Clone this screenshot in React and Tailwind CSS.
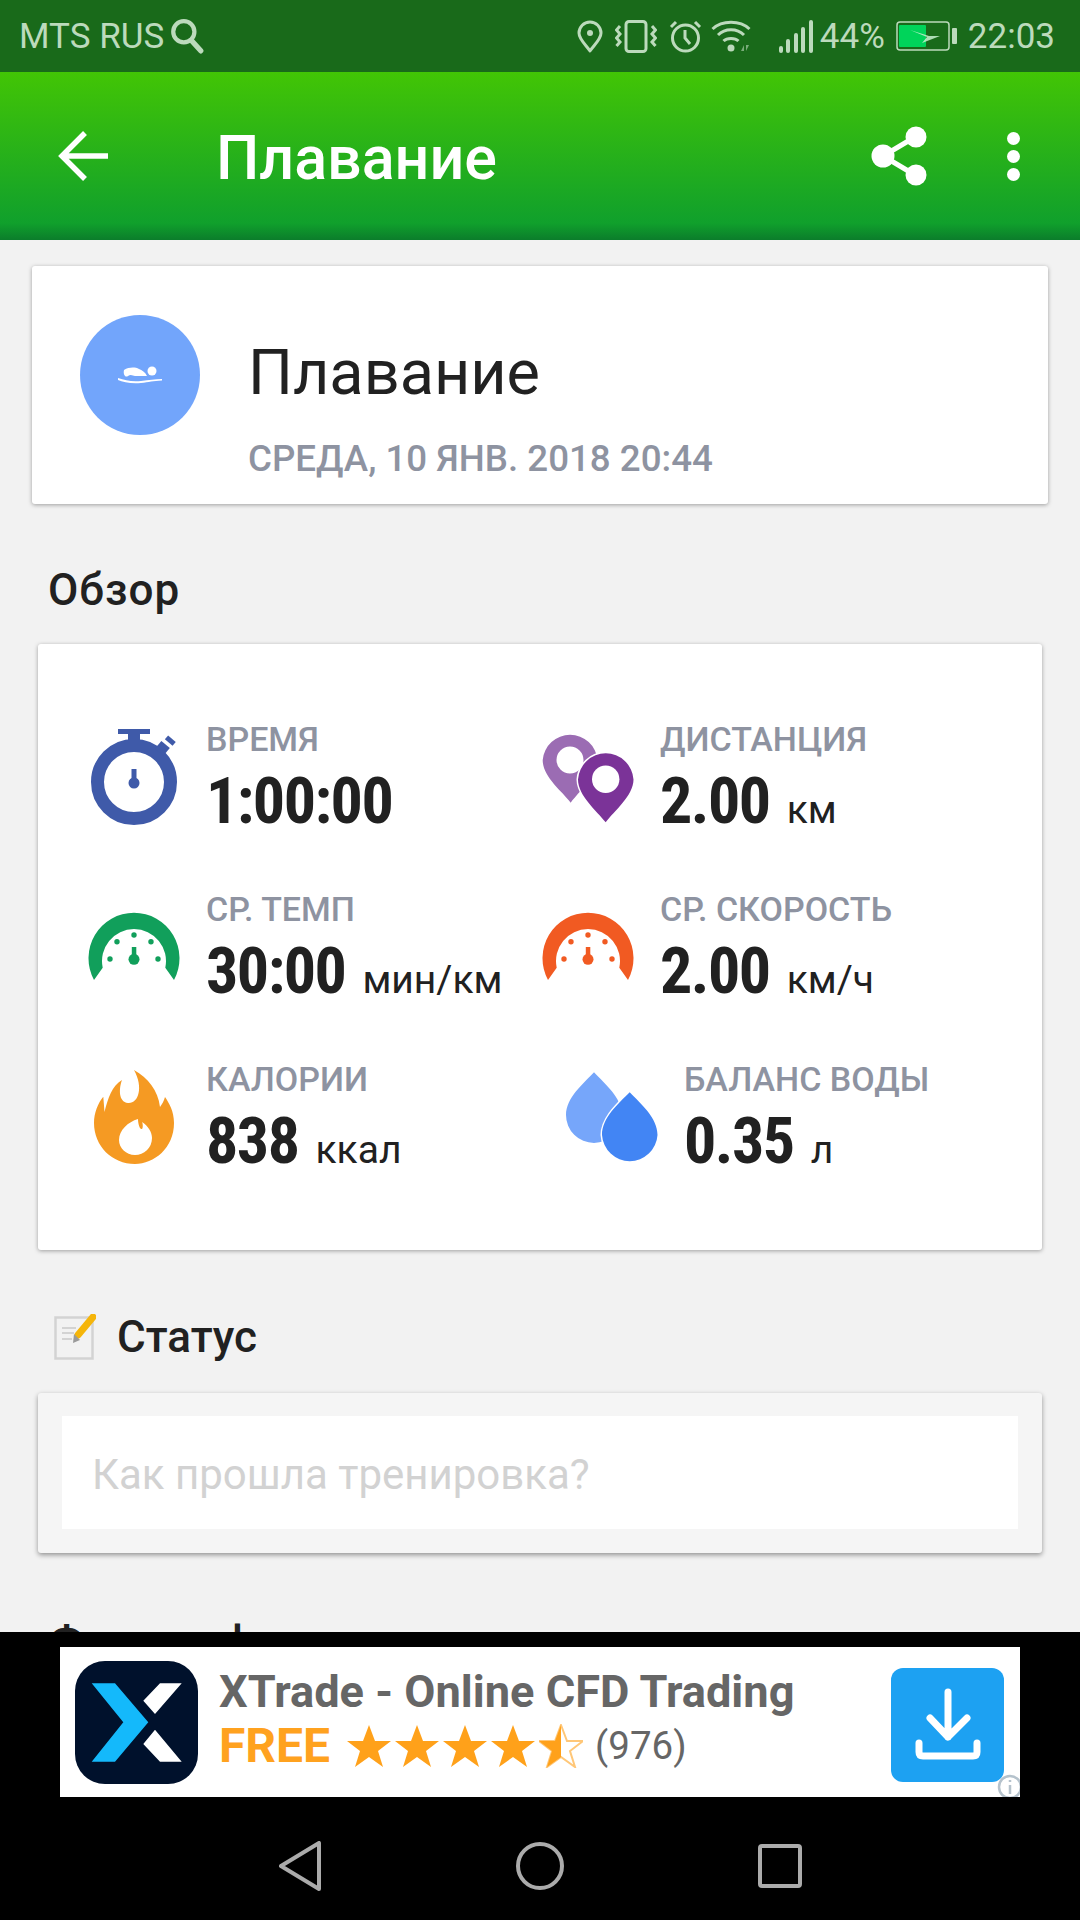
import React from 'react';

const condensed = "[font-family:'Roboto_Condensed','Liberation_Sans_Narrow',Roboto,sans-serif]";

function Stopwatch() {
  return (
    <svg width="92" height="110" viewBox="0 0 92 110">
      <circle cx="46" cy="64" r="36.5" fill="none" stroke="#3f5aa9" strokeWidth="13" />
      <rect x="30" y="11" width="32" height="5" fill="#3f5aa9" />
      <rect x="40" y="16" width="12" height="12" fill="#3f5aa9" />
      <rect x="69" y="25" width="11" height="10" transform="rotate(40 74 30)" fill="#3f5aa9" />
      <rect x="77" y="20" width="10" height="5" transform="rotate(40 82 23)" fill="#3f5aa9" />
      <rect x="43.5" y="51" width="5" height="14" fill="#3f5aa9" />
      <circle cx="46" cy="65" r="5.5" fill="#3f5aa9" />
    </svg>
  );
}

function Gauge({ color }) {
  return (
    <svg width="92" height="110" viewBox="0 0 92 110" fill={color}>
      <path d="M6 92A45.5 45.5 0 1 1 86 92L77.3 79.7A32 32 0 1 0 14.7 79.7Z" />
      <circle cx="22" cy="71" r="2.7" />
      <circle cx="29" cy="53.7" r="2.7" />
      <circle cx="46" cy="47" r="2.7" />
      <circle cx="63" cy="53.7" r="2.7" />
      <circle cx="70" cy="71" r="2.7" />
      <rect x="43.8" y="59" width="4.5" height="12" />
      <circle cx="46" cy="71.3" r="5.5" />
    </svg>
  );
}

function Pins() {
  return (
    <svg width="92" height="110" viewBox="0 0 92 110">
      <path fillRule="evenodd" fill="#9b6cb3" d="M28.7 84.7C20 73 0.7 59 0.7 42A27.5 27.5 0 0 1 55.5 42C55.5 59 37 73 28.7 84.7ZM28 28.5A13.5 13.5 0 1 0 28 55.5A13.5 13.5 0 1 0 28 28.5Z" />
      <path fill="#7b3398" stroke="#fff" strokeWidth="3" paintOrder="stroke" d="M63.7 104.3C55 93 36 78 36 61.5A27.8 27.8 0 0 1 91.5 61.5C91.5 78 72 93 63.7 104.3Z" />
      <circle cx="63.7" cy="61.3" r="13.7" fill="#fff" />
    </svg>
  );
}

function Flame() {
  return (
    <svg width="92" height="110" viewBox="0 0 92 110">
      <path fill="#f59a23" d="M46 12C60 20 70 32 72 49C74 46 76 43 77 39C81 45 86 53 86 65C86 90 66 106 47 106C24 106 6 88 6 65C6 55 10 45 15.3 38.7L16.5 54C20 40 24 28 34 22C31 30 30 44 40 45C50 46 56 30 46 12Z" />
      <path fill="#fff" d="M50 61C50 66 52 72 54 71C55 70 55 66 54 64C60 68 64 74 64 80C64 90 56 97 47 97C38 97 31 90 31 82C31 72 40 64 50 61Z" />
    </svg>
  );
}

function Drops() {
  return (
    <svg width="92" height="110" viewBox="0 0 92 110">
      <path fill="#76a6fa" d="M28 14.3C39 26 56 40 56 57A28 28 0 0 1 0 57C0 40 17 26 28 14.3Z" />
      <path fill="#4285f4" stroke="#fff" strokeWidth="3" paintOrder="stroke" d="M63.7 34.3C75 46 91.5 60 91.5 77A27.8 27.8 0 0 1 36 77C36 60 52 46 63.7 34.3Z" />
    </svg>
  );
}

function Stat({ icon, label, value, unit, className = '' }) {
  return (
    <div className={`flex h-[170px] gap-[26px] ${className}`}>
      <div className="w-[92px] shrink-0">{icon}</div>
      <div className="pt-[1px]">
        <div className="text-[34px] leading-[40px] font-medium text-[#8e93a1]">{label}</div>
        <div className="mt-[11px] flex items-baseline leading-[64px] text-[#212121] whitespace-nowrap">
          <span className={`text-[64px] font-bold tracking-[-1.5px] ${condensed}`}>{value}</span>
          {unit && <span className="ml-[17px] text-[39px]">{unit}</span>}
        </div>
      </div>
    </div>
  );
}

function Star({ half }) {
  const pts = '22,1 28,17 44,17 31,27 36,43 22,33 8,43 13,27 0,17 16,17';
  return (
    <svg width="44" height="44" viewBox="0 0 44 44">
      {half ? (
        <>
          <polygon points={pts} fill="none" stroke="#ffc778" strokeWidth="2" />
          <polygon points="22,1 16,17 0,17 13,27 8,43 22,33" fill="#ffa11a" />
        </>
      ) : (
        <polygon points={pts} fill="#ffa11a" />
      )}
    </svg>
  );
}

function StatusIcons() {
  const c = '#bcdabc';
  return (
    <>
      <svg width="26" height="33" viewBox="0 0 26 33" fill="none" stroke={c} strokeWidth="3">
        <path d="M13 31C8 24 2 19 2 13A11 11 0 0 1 24 13C24 19 18 24 13 31Z" strokeLinejoin="round" />
        <circle cx="13" cy="13" r="3" fill={c} stroke="none" />
      </svg>
      <svg className="ml-[12px]" width="42" height="33" viewBox="0 0 42 33" fill="none" stroke={c} strokeWidth="3">
        <rect x="11" y="1.5" width="20" height="30" rx="3" />
        <path d="M5 6L1.5 10L5 14L1.5 18L5 22L1.5 26M37 6L40.5 10L37 14L40.5 18L37 22L40.5 26" />
      </svg>
      <svg className="ml-[12px]" width="33" height="33" viewBox="0 0 33 33" fill="none" stroke={c} strokeWidth="3">
        <circle cx="16.5" cy="18" r="13" />
        <path d="M16 10V18L21 24M2 7L7 2M31 7L26 2" />
      </svg>
      <svg className="ml-[9px]" width="40" height="33" viewBox="0 0 40 33" fill="none" stroke={c} strokeWidth="3">
        <path d="M1.5 9C11 0 29 0 38.5 9M7 15C14 8 26 8 33 15M12.5 21C16 17.5 24 17.5 27.5 21" />
        <circle cx="20" cy="28" r="3.5" fill={c} stroke="none" />
        <path d="M30 31L33 25V31ZM35 25L38 25L35 31Z" fill={c} stroke="none" opacity="0.6" />
      </svg>
      <svg className="ml-[28px]" width="35" height="33" viewBox="0 0 35 33" fill={c}>
        <rect x="0" y="26" width="4" height="7" rx="2" />
        <rect x="7" y="19" width="4" height="14" rx="2" />
        <rect x="15" y="13" width="4" height="20" rx="2" />
        <rect x="22" y="7" width="4" height="26" rx="2" />
        <rect x="30" y="0" width="4" height="33" rx="2" />
      </svg>
      <span className="ml-[6px] text-[35px] leading-none">44%</span>
      <svg className="ml-[11px]" width="61" height="30" viewBox="0 0 61 30">
        <rect x="1" y="1" width="52" height="28" rx="3" fill="none" stroke={c} strokeWidth="1.5" />
        <rect x="3" y="4" width="27" height="22" rx="1" fill="#00d45a" />
        <rect x="56" y="7" width="5" height="16" rx="1" fill={c} />
        <path d="M14 9L33 15L44 15L26 22L31 16Z" fill="#c8f0d0" opacity="0.85" />
      </svg>
      <span className="ml-[11px] text-[35px] leading-none">22:03</span>
    </>
  );
}

export default function App() {
  const stars = [0, 1, 2, 3];

  return (
    <div className="flex h-[1920px] w-[1080px] flex-col overflow-hidden bg-black font-['Roboto',sans-serif]">
      <div className="flex h-[72px] shrink-0 items-center justify-between bg-[#196a1a] pl-[19px] pr-[25px] text-[#bcdabc]">
        <div className="flex items-center">
          <span className="text-[35px] leading-none">MTS RUS</span>
          <svg className="ml-[6px]" width="34" height="36" viewBox="0 0 32 34" fill="none" stroke="#bcdabc">
            <circle cx="13" cy="13" r="10" strokeWidth="4" />
            <path d="M20 21L29 31" strokeWidth="5" strokeLinecap="round" />
          </svg>
        </div>
        <div className="flex items-center"><StatusIcons /></div>
      </div>

      <div className="flex h-[168px] shrink-0 items-center bg-[linear-gradient(180deg,#42c505_0%,#10a02c_90%,#0b7d2b_100%)] text-white">
        <svg className="ml-[58px]" width="52" height="52" viewBox="0 0 52 52" fill="none" stroke="#fff" strokeWidth="5.5">
          <path d="M50 26H5M27 3L4 26L27 49" />
        </svg>
        <h1 className="ml-[106px] pt-[4px] text-[61px] font-medium leading-none">Плавание</h1>
        <svg className="ml-auto" width="58" height="60" viewBox="0 0 58 60" fill="#fff" stroke="#fff">
          <path d="M44 11L12 30L44 49" fill="none" strokeWidth="5" />
          <circle cx="45" cy="11" r="10.5" stroke="none" />
          <circle cx="12" cy="30" r="11.5" stroke="none" />
          <circle cx="45" cy="49" r="10.5" stroke="none" />
        </svg>
        <div className="ml-[78px] mr-[60px] flex flex-col gap-[5px]">
          <span className="h-[13px] w-[13px] rounded-full bg-white" />
          <span className="h-[13px] w-[13px] rounded-full bg-white" />
          <span className="h-[13px] w-[13px] rounded-full bg-white" />
        </div>
      </div>

      <main className="min-h-0 flex-1 overflow-hidden bg-[#f2f2f2]">
        <section className="mx-[32px] mt-[26px] flex h-[238px] items-start rounded-[3px] bg-white pl-[48px] shadow-[0_1px_4px_rgba(0,0,0,0.35)]">
          <div className="mt-[49px] flex h-[120px] w-[120px] items-center justify-center rounded-full bg-[#72a5fb]">
            <svg width="46" height="18" viewBox="0 0 46 18" fill="#fff">
              <circle cx="35" cy="5" r="4.5" />
              <path d="M7 4C12 1 18 1 22 3C25 4 28 6 30 10L18 10C16 10 14 8 11 10C8 12 6 8 7 4Z" />
              <path d="M1 12C8 14 14 16 24 15C32 14 38 13 45 13L45 14.5C36 15 32 16 24 17C14 18 6 16 1 14Z" />
            </svg>
          </div>
          <div className="ml-[48px] mt-[74px]">
            <div className="text-[63px] leading-[66px] text-[#212121]">Плавание</div>
            <div className="mt-[33px] text-[36.7px] font-medium leading-[40px] text-[#8e93a1]">СРЕДА, 10 ЯНВ. 2018 20:44</div>
          </div>
        </section>

        <h2 className="ml-[48px] mt-[64px] text-[44px] font-medium leading-[44px] tracking-[1px] text-[#212121]">Обзор</h2>

        <section className="mx-[38px] mt-[32px] grid h-[606px] grid-cols-[454px_1fr] content-start rounded-[3px] bg-white pl-[50px] pt-[74px] shadow-[0_1px_4px_rgba(0,0,0,0.35)]">
          <Stat icon={<Stopwatch />} label="ВРЕМЯ" value="1:00:00" />
          <Stat icon={<Pins />} label="ДИСТАНЦИЯ" value="2.00" unit="км" />
          <Stat icon={<Gauge color="#119f5b" />} label="СР. ТЕМП" value="30:00" unit="мин/км" />
          <Stat icon={<Gauge color="#f15a22" />} label="СР. СКОРОСТЬ" value="2.00" unit="км/ч" />
          <Stat icon={<Flame />} label="КАЛОРИИ" value="838" unit="ккал" />
          <Stat icon={<Drops />} label="БАЛАНС ВОДЫ" value="0.35" unit="л" className="ml-[24px]" />
        </section>

        <div className="ml-[54px] mt-[60px] flex h-[54px] items-center">
          <svg width="42" height="46" viewBox="0 0 42 46">
            <rect x="1.5" y="3.5" width="37" height="41" fill="#f2f2f2" stroke="#d3d3d3" strokeWidth="2.5" />
            <path d="M8 14H22M8 19H20M8 25H18" stroke="#d3d3d3" strokeWidth="2" />
            <path d="M24 21L39 3" stroke="#f5b50a" strokeWidth="7" strokeLinecap="round" />
            <path d="M20 20L26 26L19 29Z" fill="#9a9a9a" />
          </svg>
          <span className="ml-[21px] text-[44px] font-medium leading-none text-[#212121]">Статус</span>
        </div>

        <section className="mx-[38px] mt-[29px] h-[160px] rounded-[3px] bg-[#f5f5f5] px-[24px] pt-[23px] shadow-[0_2px_5px_rgba(0,0,0,0.4)]">
          <input
            placeholder="Как прошла тренировка?"
            className="h-[113px] w-full bg-white px-[30px] pt-[4px] text-[42px] outline-none placeholder:text-[#d2d2d2]"
          />
        </section>

        <h2 className="ml-[49px] mt-[67px] text-[44px] font-medium leading-[44px] text-[#212121]">Фотографии</h2>
      </main>

      <div className="h-[288px] shrink-0 bg-black">
        <div className="relative mx-[60px] mt-[15px] flex h-[150px] items-center overflow-hidden bg-white pl-[15px]">
          <svg width="123" height="123" viewBox="0 0 123 123">
            <rect width="123" height="123" rx="30" fill="#00112c" />
            <path d="M16.7 22.3H40L73.3 61.3L40 100.7H16.7L48.3 61.3Z" fill="#14b9fb" />
            <path d="M68.3 39.7L85 22.3H106.7L80 53ZM68.3 83L80 68.7L106.7 100.7H85Z" fill="#fff" />
          </svg>
          <div className="ml-[21px] -mt-[8px]">
            <div className="text-[45.2px] font-bold leading-[54px] text-[#666666]">XTrade - Online CFD Trading</div>
            <div className="mt-[2px] flex items-center leading-[50px]">
              <span className="text-[48px] font-bold text-[#ffa21f]">FREE</span>
              <div className="ml-[17px] flex gap-[4px]">
                {stars.map((i) => <Star key={i} />)}
                <Star half />
              </div>
              <span className="ml-[12px] text-[38.5px] text-[#666666]">(976)</span>
            </div>
          </div>
          <div className="absolute right-[16px] top-[21px] h-[114px] w-[113px] rounded-[12px] bg-[#1da1f2]">
            <svg width="113" height="114" viewBox="0 0 113 114" fill="none" stroke="#fff" strokeWidth="7" strokeLinecap="round" strokeLinejoin="round">
              <path d="M57 24V69M39 50L57 69L76 50M28 75V84Q28 88 32 88H82Q86 88 86 84V75" />
            </svg>
          </div>
          <svg className="absolute -right-[3px] -bottom-[3px]" width="26" height="26" viewBox="0 0 26 26" fill="none" stroke="#b5c2cc" strokeWidth="2.5">
            <circle cx="13" cy="13" r="11" fill="#fff" />
            <path d="M13 11V20M13 6V8" />
          </svg>
        </div>
        <div className="mt-[45px] flex h-[48px] items-center justify-between pl-[279px] pr-[278px]">
          <svg width="42" height="50" viewBox="0 0 42 50" fill="none" stroke="#ababab" strokeWidth="4" strokeLinejoin="round">
            <path d="M40 2V48L2 25Z" />
          </svg>
          <svg width="48" height="48" viewBox="0 0 48 48" fill="none" stroke="#ababab" strokeWidth="4">
            <circle cx="24" cy="24" r="22" />
          </svg>
          <svg width="44" height="44" viewBox="0 0 44 44" fill="none" stroke="#ababab" strokeWidth="4">
            <rect x="2" y="2" width="40" height="40" rx="2" />
          </svg>
        </div>
      </div>
    </div>
  );
}
